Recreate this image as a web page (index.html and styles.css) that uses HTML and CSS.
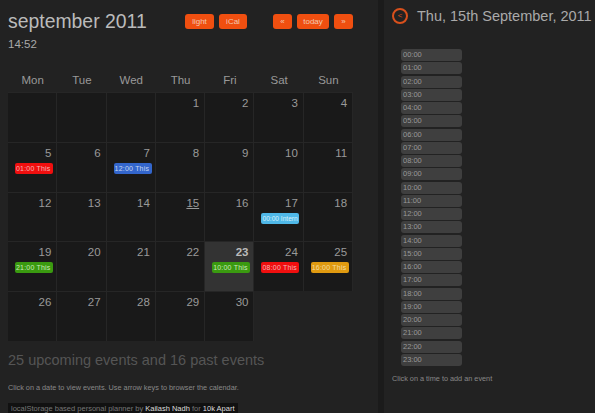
FILE: index.html
```html
<!DOCTYPE html>
<html>

<head>
     <title>Planner</title>
     <link rel="stylesheet" href="styles.css">
</head>

<body>
     <div class="main">
          <div class="header">
               <div class="heading">
                    <h1>september 2011</h1>
                    <div class="clock">14:52</div>
               </div>
               <div class="controls">
                    <a class="button wide">light</a>
                    <a class="button wide">iCal</a>
               </div>
               <div class="controls nav">
                    <a class="button small">«</a>
                    <a class="button today">today</a>
                    <a class="button small">»</a>
               </div>
          </div>

          <div class="weekdays">
               <div>Mon</div>
               <div>Tue</div>
               <div>Wed</div>
               <div>Thu</div>
               <div>Fri</div>
               <div>Sat</div>
               <div>Sun</div>
          </div>

          <div class="calendar">
               <div class="day empty"></div>
               <div class="day empty"></div>
               <div class="day empty"></div>
               <div class="day">1</div>
               <div class="day">2</div>
               <div class="day">3</div>
               <div class="day">4</div>
               <div class="day">5<span class="event red">01:00 This</span></div>
               <div class="day">6</div>
               <div class="day">7<span class="event blue">12:00 This</span></div>
               <div class="day">8</div>
               <div class="day">9</div>
               <div class="day">10</div>
               <div class="day">11</div>
               <div class="day">12</div>
               <div class="day">13</div>
               <div class="day">14</div>
               <div class="day selected">15</div>
               <div class="day">16</div>
               <div class="day">17<span class="event sky">00:00 Intern</span></div>
               <div class="day">18</div>
               <div class="day">19<span class="event green">21:00 This</span></div>
               <div class="day">20</div>
               <div class="day">21</div>
               <div class="day">22</div>
               <div class="day current">23<span class="event green">10:00 This</span></div>
               <div class="day">24<span class="event red">08:00 This</span></div>
               <div class="day">25<span class="event amber">16:00 This</span></div>
               <div class="day">26</div>
               <div class="day">27</div>
               <div class="day">28</div>
               <div class="day">29</div>
               <div class="day">30</div>
          </div>

          <h2>25 upcoming events and 16 past events</h2>
          <p class="hint">Click on a date to view events. Use arrow keys to browser the calendar.</p>
          <p class="credit">localStorage based personal planner by <a>Kailash Nadh</a> for <a>10k Apart</a></p>
     </div>

     <div class="side">
          <div class="side-head">
               <span class="back">&lt;</span>
               <h3>Thu, 15th September, 2011</h3>
          </div>
          <div class="hours">
               <div>00:00</div>
               <div>01:00</div>
               <div>02:00</div>
               <div>03:00</div>
               <div>04:00</div>
               <div>05:00</div>
               <div>06:00</div>
               <div>07:00</div>
               <div>08:00</div>
               <div>09:00</div>
               <div>10:00</div>
               <div>11:00</div>
               <div>12:00</div>
               <div>13:00</div>
               <div>14:00</div>
               <div>15:00</div>
               <div>16:00</div>
               <div>17:00</div>
               <div>18:00</div>
               <div>19:00</div>
               <div>20:00</div>
               <div>21:00</div>
               <div>22:00</div>
               <div>23:00</div>
          </div>
          <p class="side-hint">Click on a time to add an event</p>
     </div>
</body>

</html>
```
FILE: styles.css
```css
html,
body {
     height: 413px;
     overflow: hidden;
}

body {
     margin: 0;
     display: flex;
     font-family: "Liberation Sans", Arial, sans-serif;
     background-color: #222;
     color: #aaa;
}

.main {
     width: 378px;
     height: 413px;
     padding-left: 8px;
     box-sizing: border-box;
     flex-shrink: 0;
}

.header {
     display: flex;
     height: 66px;
     padding-top: 10px;
     box-sizing: border-box;
}

.heading {
     width: 177px;
}

h1 {
     margin: 0;
     font-size: 19.4px;
     line-height: 22px;
     font-weight: normal;
     color: #bbb;
}

.clock {
     margin-top: 5px;
     font-size: 11.5px;
     line-height: 14px;
     color: #aaa;
}

.controls {
     display: flex;
     gap: 5px;
     padding-top: 4px;
}

.nav {
     margin-left: 26px;
     gap: 5px;
}

.button {
     height: 15px;
     line-height: 15px;
     border-radius: 3px;
     background-color: #f04f10;
     color: #f3c8b0;
     font-size: 8px;
     text-align: center;
}

.wide {
     width: 29px;
}

.wide + .wide {
     width: 28px;
}

.small {
     width: 19px;
}

.today {
     width: 32px;
}

.weekdays {
     display: grid;
     grid-template-columns: repeat(7, 49.3px);
     height: 26px;
     font-size: 11.5px;
     line-height: 29px;
     text-align: center;
     color: #999;
}

.calendar {
     display: grid;
     grid-template-columns: repeat(7, 49.3px);
     grid-auto-rows: 49.8px;
     width: 345px;
}

.day {
     padding: 3px 5px 0 0;
     box-sizing: border-box;
     border-top: 1px solid #262626;
     border-right: 1px solid #262626;
     background-color: #191919;
     font-size: 11.5px;
     line-height: 14px;
     text-align: right;
     color: #999;
}

.day.selected {
     text-decoration: underline;
}

.day.current {
     background-color: #333;
     font-weight: bold;
     color: #bbb;
}

.event {
     display: block;
     width: 37px;
     height: 11px;
     margin: 3px 0 0 7px;
     padding-left: 1px;
     overflow: hidden;
     border-radius: 2px;
     font-size: 7px;
     font-weight: normal;
     letter-spacing: 0.2px;
     line-height: 11px;
     text-align: left;
     white-space: nowrap;
}

.red {
     background-color: #f00f0f;
     color: #f4b4b4;
}

.blue {
     background-color: #3366cc;
     color: #c8d6f0;
}

.sky {
     background-color: #4fb8e8;
     color: #d8f0fa;
     font-size: 6.6px;
     letter-spacing: 0;
}

.green {
     background-color: #3a9a10;
     color: #c8e8b8;
}

.amber {
     background-color: #e09a10;
     color: #f4dca0;
}

h2 {
     margin: 10px 0 0;
     font-size: 14.5px;
     line-height: 18px;
     font-weight: normal;
     color: #555;
}

.hint {
     margin: 14px 0 0;
     font-size: 7.3px;
     line-height: 10px;
     color: #888;
}

.credit {
     display: inline-block;
     margin: 10px 0 0;
     padding: 0 3px;
     background-color: #111;
     font-size: 7.5px;
     line-height: 11px;
     color: #777;
}

.credit a {
     color: #ddd;
}

.side {
     flex: 1;
     height: 413px;
     padding-left: 8px;
     border-left: 6px solid #1b1b1b;
}

.side-head {
     display: flex;
     align-items: center;
     gap: 9px;
     height: 16px;
     margin-top: 8px;
}

.back {
     width: 12px;
     height: 12px;
     border: 2px solid #d9501c;
     border-radius: 50%;
     font-size: 8px;
     line-height: 11px;
     text-align: center;
     color: #d9501c;
}

h3 {
     margin: 0;
     font-size: 14.5px;
     line-height: 16px;
     font-weight: normal;
     white-space: nowrap;
     color: #aaa;
}

.hours {
     display: flex;
     flex-direction: column;
     gap: 1.25px;
     width: 61px;
     margin: 25px 0 0 9px;
}

.hours div {
     height: 12px;
     padding-left: 2px;
     border-radius: 3px;
     background-color: #3f3f3f;
     font-size: 7.5px;
     line-height: 12px;
     color: #999;
}

.side-hint {
     margin: 8px 0 0;
     font-size: 7.3px;
     line-height: 10px;
     color: #888;
}
```
